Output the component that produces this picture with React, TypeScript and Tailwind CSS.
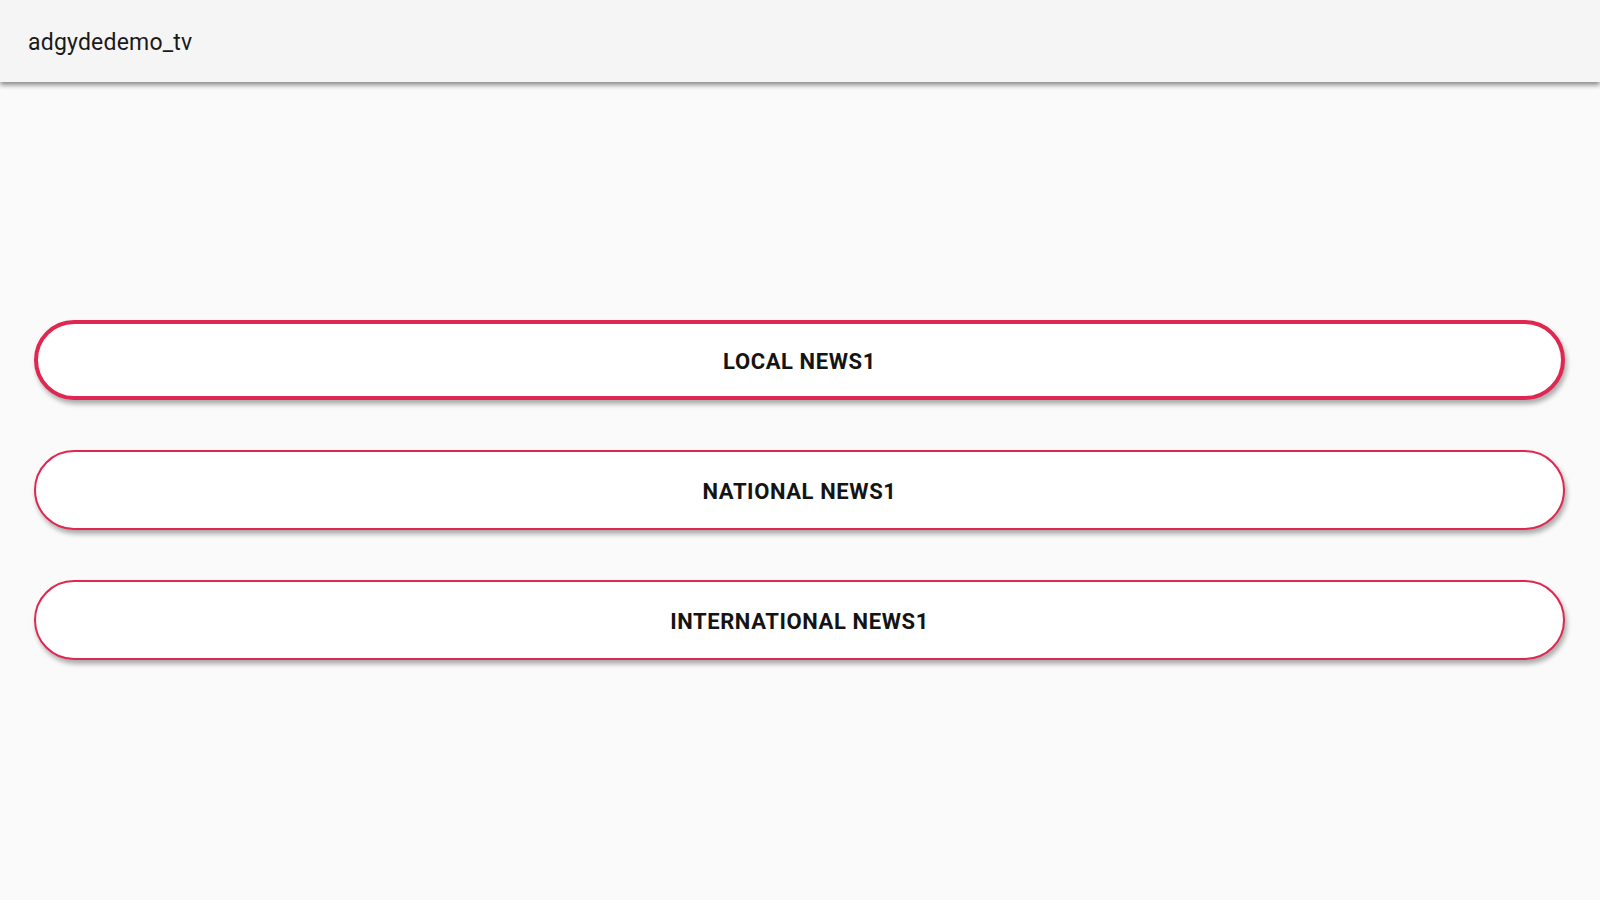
import React from "react";

export default function App() {
  const items = ["LOCAL NEWS1", "NATIONAL NEWS1", "INTERNATIONAL NEWS1"];
  return (
    <div className="w-[1600px] h-[900px] bg-[#fafafa] overflow-hidden" style={{ fontFamily: "Roboto, 'Liberation Sans', sans-serif" }}>
      <header className="h-[82px] bg-[#f5f5f5] flex items-center pl-[28px] pt-[4px] shadow-[0_3px_5px_rgba(0,0,0,0.45)] relative z-10">
        <span className="text-[23px] text-[#1a1a1a] tracking-[0.2px]">adgydedemo_tv</span>
      </header>
      <main className="flex flex-col gap-[50px] pt-[238px] pl-[34px] pr-[35px]">
        {items.map((t, i) => (
          <button
            key={t}
            className={
              "h-[80px] w-full rounded-full bg-white flex items-center justify-center shadow-[2px_4px_5px_rgba(0,0,0,0.32)] " +
              (i === 0 ? "border-[4px] border-[#df2751]" : "border-[2px] border-[#df2751]")
            }
          >
            <span className="text-[22px] font-bold text-[#141414] tracking-[0.6px] pt-[3px]">{t}</span>
          </button>
        ))}
      </main>
    </div>
  );
}
